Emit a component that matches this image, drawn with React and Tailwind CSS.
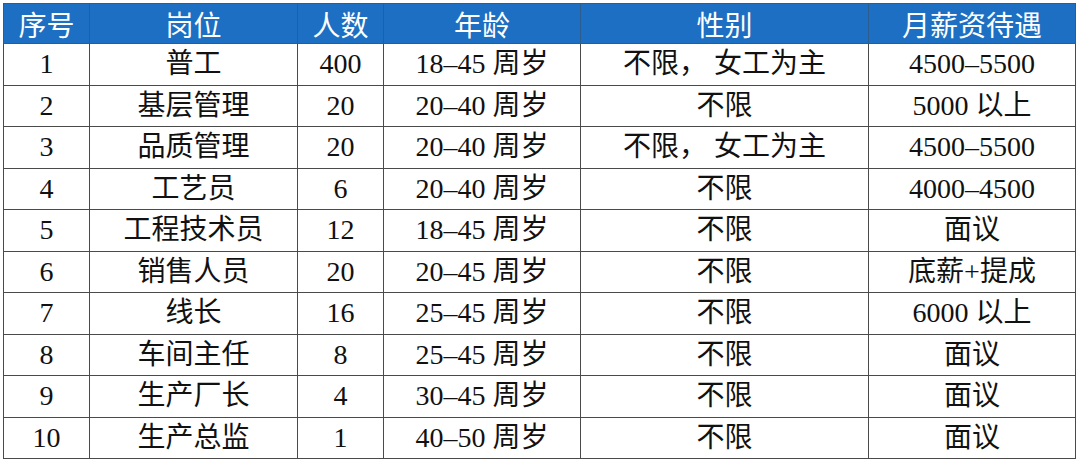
import React from 'react'

// 招聘岗位表
const rows = [
  ['1', '普工', '400', '18–45 周岁', '不限， 女工为主', '4500–5500'],
  ['2', '基层管理', '20', '20–40 周岁', '不限', '5000 以上'],
  ['3', '品质管理', '20', '20–40 周岁', '不限， 女工为主', '4500–5500'],
  ['4', '工艺员', '6', '20–40 周岁', '不限', '4000–4500'],
  ['5', '工程技术员', '12', '18–45 周岁', '不限', '面议'],
  ['6', '销售人员', '20', '20–45 周岁', '不限', '底薪+提成'],
  ['7', '线长', '16', '25–45 周岁', '不限', '6000 以上'],
  ['8', '车间主任', '8', '25–45 周岁', '不限', '面议'],
  ['9', '生产厂长', '4', '30–45 周岁', '不限', '面议'],
  ['10', '生产总监', '1', '40–50 周岁', '不限', '面议'],
]

const headers = ['序号', '岗位', '人数', '年龄', '性别', '月薪资待遇']
const widths = ['w-[86px]', 'w-[208px]', 'w-[86px]', 'w-[197px]', 'w-[288px]', 'w-[207px]']

const App = () => {
  return (
    <div className="w-[1080px] h-[461px] bg-white pt-[3px] pl-[3px] overflow-hidden">
      <table
        className="border-collapse table-fixed w-[1072px] text-[28px] text-[#111]"
        style={{ fontFamily: '"Liberation Serif", "Noto Sans CJK SC", serif' }}
      >
        <thead>
          <tr className="h-[40px] bg-[#1c6fc2]">
            {headers.map((h, i) => (
              <th
                key={h}
                className={`${widths[i]} border border-[#2c5d8f] text-white font-normal text-center p-0 leading-none`}
                style={{ fontFamily: '"Noto Sans CJK SC", sans-serif' }}
              >
                {h}
              </th>
            ))}
          </tr>
        </thead>
        <tbody>
          {rows.map(r => (
            <tr key={r[0]} className="h-[41.5px]">
              {r.map((c, i) => (
                <td key={i} className="border border-[#4a4a4a] text-center p-0 leading-none whitespace-nowrap">
                  {c}
                </td>
              ))}
            </tr>
          ))}
        </tbody>
      </table>
    </div>
  )
}

export default App
